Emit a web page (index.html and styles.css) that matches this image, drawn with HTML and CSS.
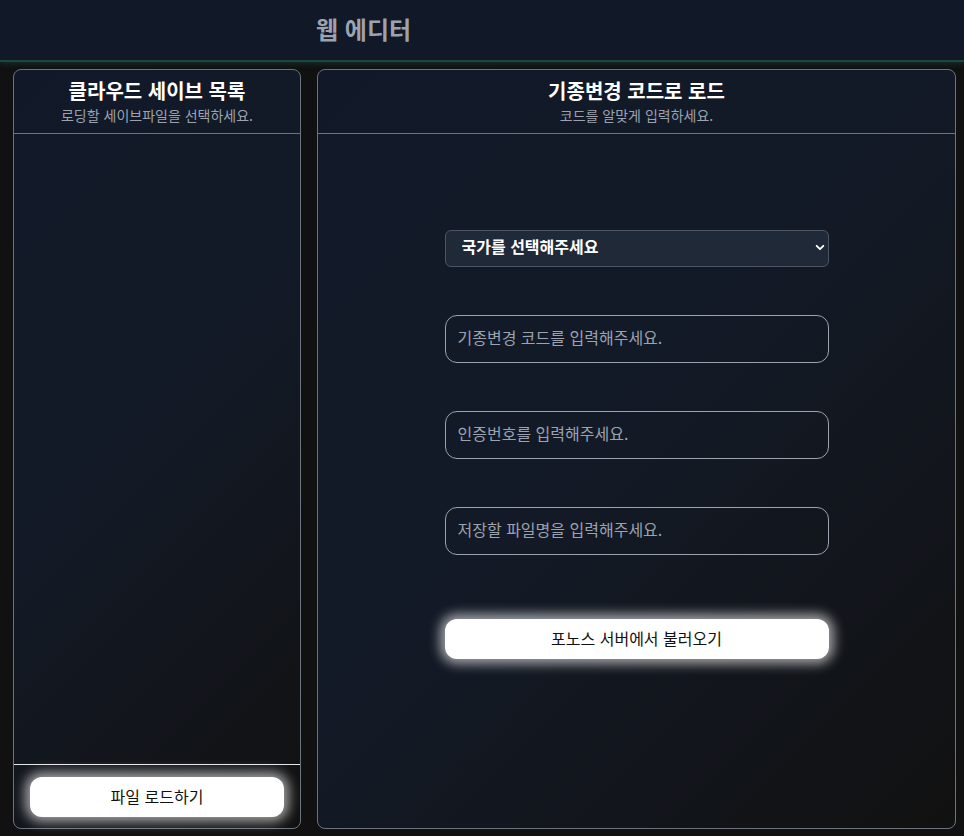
FILE: index.html
```html
<!DOCTYPE html>
<html lang="ko">
<head>
<meta charset="utf-8">
<title>웹 에디터</title>
<link rel="stylesheet" href="styles.css">
</head>
<body>
<header class="topbar">
  <h1 class="app-title">웹 에디터</h1>
</header>
<main class="layout">
  <section class="panel panel-list">
    <div class="panel-head">
      <h2 class="panel-title">클라우드 세이브 목록</h2>
      <p class="panel-sub">로딩할 세이브파일을 선택하세요.</p>
    </div>
    <div class="save-list"></div>
    <div class="panel-foot">
      <button class="btn-glow btn-load">파일 로드하기</button>
    </div>
  </section>
  <section class="panel panel-form">
    <div class="panel-head">
      <h2 class="panel-title">기종변경 코드로 로드</h2>
      <p class="panel-sub">코드를 알맞게 입력하세요.</p>
    </div>
    <form class="code-form">
      <div class="select-wrap">
        <select class="country">
          <option>국가를 선택해주세요</option>
        </select>
        <svg class="chev" width="12" height="8" viewBox="0 0 12 8"><path d="M2 2l4 4 4-4" fill="none" stroke="#fff" stroke-width="2.2" stroke-linecap="round" stroke-linejoin="round"/></svg>
      </div>
      <input class="field" type="text" placeholder="기종변경 코드를 입력해주세요.">
      <input class="field" type="text" placeholder="인증번호를 입력해주세요.">
      <input class="field" type="text" placeholder="저장할 파일명을 입력해주세요.">
      <button type="button" class="btn-glow btn-fetch">포노스 서버에서 불러오기</button>
    </form>
  </section>
</main>
</body>
</html>
```

FILE: styles.css
```css
* { box-sizing: border-box; }
html, body { height: 100%; }
body {
  margin: 0;
  background: #111111;
  font-family: "Noto Sans CJK KR", "Noto Sans", sans-serif;
  color: #fff;
  display: flex;
  flex-direction: column;
  height: 836px;
  overflow: hidden;
}
.topbar {
  height: 62px;
  flex: none;
  background: #111827;
  border-bottom: 2px solid #1c4640;
  box-shadow: 0 2px 5px rgba(24, 70, 62, 0.55);
  display: flex;
  align-items: center;
  padding-left: 316px;
  position: relative;
  z-index: 1;
}
.app-title {
  margin: 0;
  font-size: 24px;
  font-weight: 700;
  color: #9ca3af;
  line-height: 1;
  padding-bottom: 2px;
}
.layout {
  flex: 1;
  display: grid;
  grid-template-columns: 288px 1fr;
  gap: 16px;
  padding: 7px 8px 7px 13px;
  min-height: 0;
}
.panel {
  border: 1px solid #6b7280;
  border-radius: 8px;
  background: linear-gradient(135deg, #111827 0%, #131a27 45%, #111111 100%);
  display: flex;
  flex-direction: column;
  min-height: 0;
}
.panel-head {
  height: 64px;
  flex: none;
  border-bottom: 1px solid #6b7280;
  text-align: center;
  padding-top: 7px;
}
.panel-title {
  margin: 0;
  font-size: 20px;
  font-weight: 700;
  line-height: 28px;
  color: #fff;
}
.panel-sub {
  margin: 0;
  font-size: 14px;
  line-height: 20px;
  color: #9ca3af;
}
.save-list { flex: 1; }
.panel-foot {
  flex: none;
  border-top: 1px solid #e5e7eb;
  padding: 12px 16px 11px;
}
.btn-glow {
  display: block;
  width: 100%;
  height: 40px;
  border: none;
  border-radius: 12px;
  background: #fff;
  color: #111;
  font-family: inherit;
  font-size: 16px;
  padding: 0 0 3px;
  box-shadow: 0 0 12px 5px rgba(255, 255, 255, 0.6);
  cursor: pointer;
}
.btn-load { padding-bottom: 2px; }
.code-form {
  width: 384px;
  margin: 96px auto 0;
  display: flex;
  flex-direction: column;
  gap: 48px;
}
.select-wrap { position: relative; }
.country {
  appearance: none;
  -webkit-appearance: none;
  width: 100%;
  height: 37px;
  background: #1f2937;
  border: 1px solid #4b5563;
  border-radius: 6px;
  color: #fff;
  font-family: inherit;
  font-size: 16px;
  font-weight: 700;
  padding: 0 16px 5px;
}
.chev {
  position: absolute;
  right: 4px;
  top: 14px;
  width: 10px;
  height: 7px;
  pointer-events: none;
}
.field {
  height: 48px;
  width: 100%;
  background: transparent;
  border: 1px solid #9ca3af;
  border-radius: 12px;
  color: #fff;
  font-family: inherit;
  font-size: 16px;
  padding: 0 12px 4px;
}
.field::placeholder { color: #9ca3af; }
.btn-fetch { margin-top: 16px; }
```
